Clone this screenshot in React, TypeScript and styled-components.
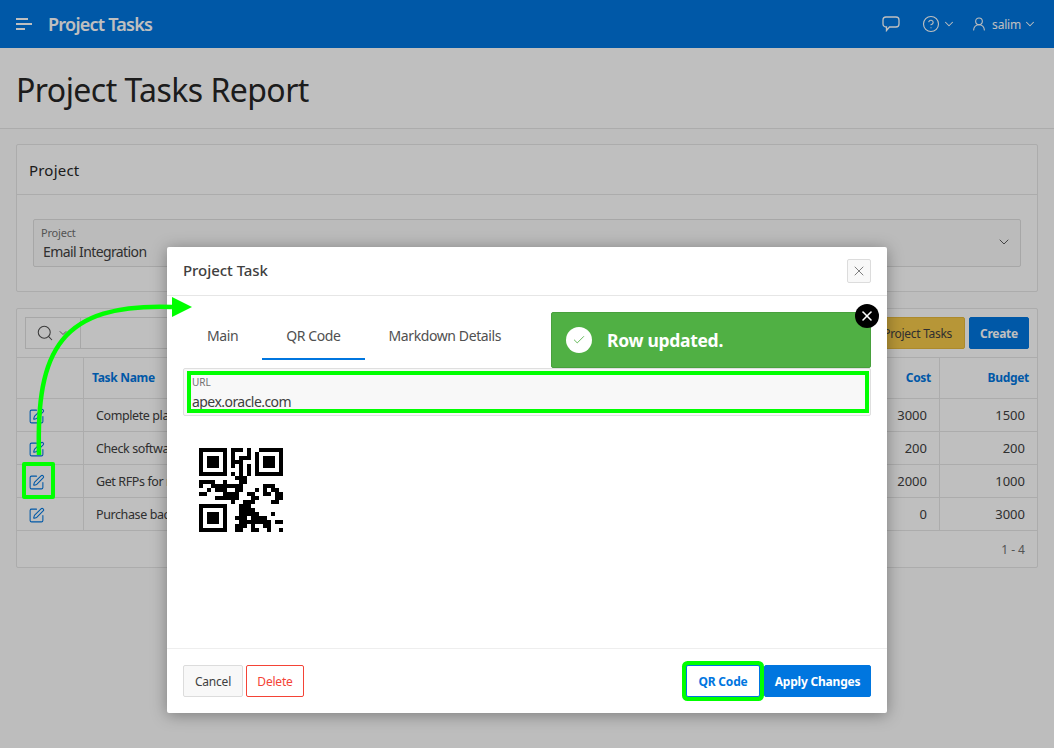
import styled, { createGlobalStyle } from "styled-components";
import { Check, ChevronDown, CircleHelp, Search, SquarePen, UserRound, X } from "lucide-react";

const QR_ROWS = [
  "111111101110100111111",
  "100000101000101000001",
  "101110101011101011101",
  "101110101110001011101",
  "101110101010101011101",
  "100000100010101000001",
  "111111101010101111111",
  "000000000111000000000",
  "111100100011000000000",
  "100111111110000011100",
  "001011100110001010110",
  "110000111100110011011",
  "000011111100011000011",
  "000000001001110000110",
  "111111100011100000000",
  "100000100011110000000",
  "101110100011111000100",
  "101110100111011110000",
  "101110100011111111011",
  "100000100111010011000",
  "111111100110011001001",
];

const TASKS = [
  { name: "Complete plan", cost: 3000, budget: 1500 },
  { name: "Check software", cost: 200, budget: 200 },
  { name: "Get RFPs for new", cost: 2000, budget: 1000, highlighted: true },
  { name: "Purchase backup", cost: 0, budget: 3000 },
];

export default function App() {
  return (
    <Page>
      <GlobalStyle />
      <Header>
        <svg width="16" height="12" viewBox="0 0 16 12">
          <path d="M0 1h12M0 6h16M0 11h9" stroke="#fff" strokeWidth="2" fill="none" />
        </svg>
        <AppTitle>Project Tasks</AppTitle>
        <HeaderActions>
          <svg width="18" height="16" viewBox="0 0 18 16" fill="none" stroke="#fff" strokeWidth="1.3">
            <path d="M4 1h10a3 3 0 0 1 3 3v4a3 3 0 0 1-3 3H7.5L4.5 14.5V11H4a3 3 0 0 1-3-3V4a3 3 0 0 1 3-3z" />
          </svg>
          <HelpMenu>
            <CircleHelp size={18} strokeWidth={1.5} />
            <ChevronDown size={14} strokeWidth={1.8} />
          </HelpMenu>
          <UserMenu>
            <UserRound size={16} strokeWidth={1.6} />
            <UserName>salim</UserName>
            <ChevronDown size={14} strokeWidth={1.8} />
          </UserMenu>
        </HeaderActions>
      </Header>

      <TitleBar>
        <PageTitle>Project Tasks Report</PageTitle>
      </TitleBar>

      <Content>
        <Region>
          <RegionHeader>Project</RegionHeader>
          <RegionBody>
            <SelectField>
              <FieldLabel>Project</FieldLabel>
              <SelectValue>Email Integration</SelectValue>
              <SelectChevron>
                <ChevronDown size={16} strokeWidth={1.4} />
              </SelectChevron>
            </SelectField>
          </RegionBody>
        </Region>

        <Region>
          <Toolbar>
            <SearchButton>
              <Search size={18} strokeWidth={1.4} />
              <ChevronDown size={12} strokeWidth={1.6} />
            </SearchButton>
            <SearchInput />
            <ToolbarSpacer />
            <YellowButton>Project Tasks</YellowButton>
            <CreateButton>Create</CreateButton>
          </Toolbar>
          <HeadRow>
            <HeadCell />
            <HeadCell>Task Name</HeadCell>
            <HeadCell $right>Cost</HeadCell>
            <HeadCell $right>Budget</HeadCell>
          </HeadRow>
          {TASKS.map((task) => (
            <BodyRow key={task.name}>
              <IconCell>
                <SquarePen size={17} strokeWidth={1.5} />
                {task.highlighted && <IconCallout />}
              </IconCell>
              <NameCell>{task.name}</NameCell>
              <NumberCell>{task.cost}</NumberCell>
              <NumberCell>{task.budget}</NumberCell>
            </BodyRow>
          ))}
          <Pagination>1 - 4</Pagination>
        </Region>
      </Content>

      <Overlay />

      <Modal>
        <ModalHeader>
          <ModalTitle>Project Task</ModalTitle>
          <CloseButton>
            <X size={16} strokeWidth={1} />
          </CloseButton>
        </ModalHeader>

        <ModalBody>
          <Tabs>
            <Tab>Main</Tab>
            <Tab $active>QR Code</Tab>
            <Tab>Markdown Details</Tab>
          </Tabs>
          <UrlField>
            <UrlLabel>URL</UrlLabel>
            <UrlValue>apex.oracle.com</UrlValue>
            <FieldCallout />
          </UrlField>
          <QrImage width="84" height="84" viewBox="0 0 21 21" shapeRendering="crispEdges">
            {QR_ROWS.map((row, y) =>
              row
                .split("")
                .map((cell, x) => (cell === "1" ? <rect key={`${x}-${y}`} x={x} y={y} width="1" height="1" /> : null))
            )}
          </QrImage>
        </ModalBody>

        <ModalFooter>
          <CancelButton>Cancel</CancelButton>
          <DeleteButton>Delete</DeleteButton>
          <FooterSpacer />
          <QrButton>QR Code</QrButton>
          <ApplyButton>Apply Changes</ApplyButton>
        </ModalFooter>

        <Toast>
          <ToastIcon>
            <Check size={14} strokeWidth={1.5} />
          </ToastIcon>
          <ToastText>Row updated.</ToastText>
          <ToastClose>
            <X size={16} strokeWidth={2.4} />
          </ToastClose>
        </Toast>
      </Modal>

      <ArrowLayer width="1054" height="748" viewBox="0 0 1054 748">
        <path d="M39 455C36 350 60 303 172 307" fill="none" stroke="#00ff00" strokeWidth="4.5" />
        <path d="M172 297L192 307L172 317z" fill="#00ff00" />
      </ArrowLayer>
    </Page>
  );
}

const GlobalStyle = createGlobalStyle`
  html, body {
    margin: 0;
    padding: 0;
    background: #fdfdfd;
  }
  * {
    box-sizing: border-box;
  }
  body {
    font-family: "Noto Sans", "Open Sans", Arial, sans-serif;
    font-size: 13px;
    color: #404040;
  }
`;

const Page = styled.div`
  position: relative;
  width: 1054px;
  height: 748px;
  overflow: hidden;
`;

const Header = styled.header`
  display: flex;
  align-items: center;
  height: 48px;
  padding: 0 17px 0 16px;
  background: #0076df;
  color: #fff;
`;

const AppTitle = styled.div`
  margin-left: 16px;
  font-size: 18px;
  font-weight: 600;
  letter-spacing: -0.75px;
`;

const HeaderActions = styled.div`
  display: flex;
  align-items: center;
  margin-left: auto;
`;

const HelpMenu = styled.div`
  display: flex;
  align-items: center;
  gap: 2px;
  margin-left: 22px;
`;

const UserMenu = styled.div`
  display: flex;
  align-items: center;
  margin-left: 15px;
`;

const UserName = styled.span`
  margin: 0 2px 0 5px;
  font-size: 12px;
  letter-spacing: -0.2px;
`;

const TitleBar = styled.div`
  height: 81px;
  padding: 22px 16px 0;
  background: #fff;
  border-bottom: 1px solid #e6e6e6;
`;

const PageTitle = styled.h1`
  margin: 0;
  font-size: 32px;
  line-height: 40px;
  font-weight: 400;
  letter-spacing: -0.55px;
  color: #262626;
`;

const Content = styled.main`
  display: flex;
  flex-direction: column;
  gap: 16px;
  padding: 15px 16px;
`;

const Region = styled.section`
  background: #fff;
  border: 1px solid #e6e6e6;
  border-radius: 2px;
`;

const RegionHeader = styled.div`
  height: 50px;
  padding: 0 12px;
  border-bottom: 1px solid #e6e6e6;
  font-size: 15px;
  line-height: 50px;
  letter-spacing: 0.2px;
  color: #262626;
`;

const RegionBody = styled.div`
  padding: 24px 16px;
`;

const SelectField = styled.div`
  position: relative;
  height: 48px;
  padding: 6px 7px;
  background: #fafafa;
  border: 1px solid #dfdfdf;
  border-radius: 2px;
`;

const FieldLabel = styled.div`
  font-size: 11px;
  line-height: 14px;
  letter-spacing: -0.2px;
  color: #707070;
`;

const SelectValue = styled.div`
  margin: 2px 0 0 2px;
  font-size: 14px;
  line-height: 20px;
  letter-spacing: -0.6px;
  color: #404040;
`;

const SelectChevron = styled.span`
  position: absolute;
  top: 14px;
  right: 8px;
  color: #505050;
`;

const Toolbar = styled.div`
  display: flex;
  align-items: center;
  height: 49px;
  padding: 0 8px;
  border-bottom: 1px solid #e6e6e6;
`;

const SearchButton = styled.div`
  display: flex;
  align-items: center;
  gap: 3px;
  width: 56px;
  height: 32px;
  padding-left: 10px;
  border: 1px solid #dfdfdf;
  color: #505050;
`;

const SearchInput = styled.div`
  width: 300px;
  height: 32px;
  border: 1px solid #dfdfdf;
  border-left: none;
`;

const ToolbarSpacer = styled.div`
  flex: 1;
`;

const ToolbarButton = styled.button`
  height: 32px;
  border-radius: 2px;
  font-family: inherit;
  font-size: 12px;
`;

const YellowButton = styled(ToolbarButton)`
  padding: 0 12px 0 60px;
  margin-right: 4px;
  background: #f5c84a;
  border: 1px solid #e6b93c;
  letter-spacing: -0.3px;
  color: #404040;
`;

const CreateButton = styled(ToolbarButton)`
  width: 60px;
  background: #0076df;
  border: 1px solid #0076df;
  font-weight: 700;
  letter-spacing: -0.3px;
  color: #fff;
`;

const tableColumns = "67px 1fr 79px 97px";

const HeadRow = styled.div`
  display: grid;
  grid-template-columns: ${tableColumns};
  height: 41px;
`;

const HeadCell = styled.div<{ $right?: boolean }>`
  padding: 0 8px;
  border-right: 1px solid #e6e6e6;
  border-bottom: 1px solid #e6e6e6;
  background: #fff;
  font-size: 12px;
  font-weight: 700;
  line-height: 40px;
  letter-spacing: -0.3px;
  color: #0076df;
  text-align: ${(p) => (p.$right ? "right" : "left")};
  &:last-child {
    border-right: none;
  }
`;

const BodyRow = styled.div`
  display: grid;
  grid-template-columns: ${tableColumns};
  height: 33px;
`;

const NameCell = styled.div`
  padding: 1px 12px 0;
  border-right: 1px solid #e6e6e6;
  border-bottom: 1px solid #e6e6e6;
  font-size: 12.5px;
  line-height: 31px;
  letter-spacing: -0.4px;
  white-space: nowrap;
  overflow: hidden;
  color: #404040;
`;

const NumberCell = styled(NameCell)`
  font-size: 13px;
  letter-spacing: 0;
  text-align: right;
  &:last-child {
    border-right: none;
  }
`;

const IconCell = styled.div`
  position: relative;
  display: flex;
  align-items: center;
  padding: 2px 0 0 11px;
  border-right: 1px solid #e6e6e6;
  border-bottom: 1px solid #e6e6e6;
  color: #0076df;
`;

const IconCallout = styled.span`
  position: absolute;
  z-index: 20;
  top: -3px;
  left: 5px;
  width: 33px;
  height: 37px;
  border: 4px solid #00ff00;
  border-radius: 2px;
`;

const Pagination = styled.div`
  height: 36px;
  padding: 0 12px;
  font-size: 12px;
  line-height: 37px;
  color: #707070;
  text-align: right;
`;

const Overlay = styled.div`
  position: absolute;
  inset: 0;
  z-index: 10;
  background: rgba(0, 0, 0, 0.25);
`;

const Modal = styled.div`
  position: absolute;
  z-index: 15;
  top: 247px;
  left: 167px;
  display: flex;
  flex-direction: column;
  width: 720px;
  height: 466px;
  background: #fff;
  border-radius: 2px;
  box-shadow: 0 2px 16px rgba(0, 0, 0, 0.35);
`;

const ModalHeader = styled.div`
  display: flex;
  align-items: center;
  justify-content: space-between;
  height: 49px;
  padding: 0 16px;
  border-bottom: 1px solid #e6e6e6;
`;

const ModalTitle = styled.div`
  margin-top: -2px;
  font-size: 15px;
  font-weight: 500;
  letter-spacing: -0.05px;
  color: #404040;
`;

const CloseButton = styled.button`
  display: flex;
  align-items: center;
  justify-content: center;
  width: 24px;
  height: 24px;
  padding: 0;
  background: #f8f8f8;
  border: 1px solid #dcdcdc;
  border-radius: 2px;
  color: #404040;
`;

const ModalBody = styled.div`
  flex: 1;
  padding: 16px 16px 0;
`;

const Tabs = styled.div`
  display: flex;
  height: 48px;
`;

const Tab = styled.div<{ $active?: boolean }>`
  height: 48px;
  padding: 0 24px;
  border-bottom: 2px solid ${(p) => (p.$active ? "#0076df" : "transparent")};
  font-size: 14px;
  line-height: 48px;
  letter-spacing: -0.4px;
  color: #505050;
`;

const UrlField = styled.div`
  position: relative;
  height: 48px;
  margin-top: 8px;
  padding: 7px 8px;
  background: #f8f8f8;
  border: 1px solid #dfdfdf;
  border-radius: 2px;
`;

const UrlLabel = styled.div`
  font-size: 10px;
  line-height: 13px;
  color: #707070;
`;

const UrlValue = styled.div`
  margin-top: 3px;
  font-size: 14px;
  line-height: 20px;
  letter-spacing: -0.55px;
  color: #404040;
`;

const FieldCallout = styled.span`
  position: absolute;
  top: 2px;
  left: 3px;
  right: 1px;
  bottom: 2px;
  border: 4px solid #00ff00;
`;

const QrImage = styled.svg`
  display: block;
  margin: 32px 0 0 16px;
`;

const ModalFooter = styled.div`
  display: flex;
  align-items: center;
  gap: 3px;
  height: 65px;
  padding: 16px;
  border-top: 1px solid #eeeeee;
`;

const FooterSpacer = styled.div`
  flex: 1;
`;

const FooterButton = styled.button`
  height: 32px;
  padding: 0;
  border-radius: 2px;
  font-family: inherit;
  font-size: 12px;
  letter-spacing: -0.2px;
`;

const CancelButton = styled(FooterButton)`
  width: 60px;
  background: #f8f8f8;
  border: 1px solid #dcdcdc;
  color: #404040;
`;

const DeleteButton = styled(FooterButton)`
  width: 58px;
  background: #fff;
  border: 1px solid #f44336;
  color: #f44336;
`;

const QrButton = styled(FooterButton)`
  width: 74px;
  margin-right: 1px;
  background: #fff;
  border: 1px solid #0076df;
  font-weight: 700;
  color: #0076df;
  box-shadow: 0 0 0 4px #00ff00;
`;

const ApplyButton = styled(FooterButton)`
  width: 107px;
  background: #0076df;
  border: 1px solid #0076df;
  font-weight: 700;
  color: #fff;
`;

const Toast = styled.div`
  position: absolute;
  top: 65px;
  left: 384px;
  display: flex;
  align-items: center;
  width: 320px;
  height: 56px;
  padding-left: 14px;
  background: #50b044;
  border: 1px solid #48a03d;
  border-radius: 2px;
`;

const ToastIcon = styled.span`
  display: flex;
  align-items: center;
  justify-content: center;
  width: 26px;
  height: 26px;
  background: #fff;
  border-radius: 50%;
  color: #50b044;
`;

const ToastText = styled.div`
  margin-left: 15px;
  font-size: 17.5px;
  font-weight: 700;
  letter-spacing: -0.3px;
  color: #fff;
`;

const ToastClose = styled.span`
  position: absolute;
  top: -9px;
  right: -9px;
  display: flex;
  align-items: center;
  justify-content: center;
  width: 24px;
  height: 24px;
  background: #000;
  border-radius: 50%;
  color: #fff;
`;

const ArrowLayer = styled.svg`
  position: absolute;
  top: 0;
  left: 0;
  z-index: 30;
  pointer-events: none;
`;
